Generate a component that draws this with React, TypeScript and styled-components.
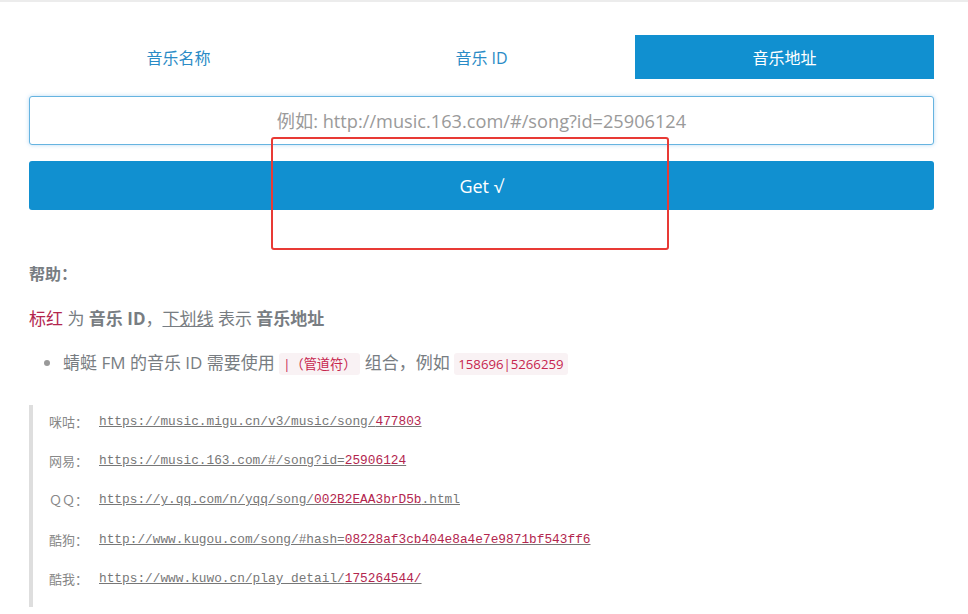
import React from "react";
import styled, { createGlobalStyle } from "styled-components";

const Global = createGlobalStyle`
  html, body { margin: 0; padding: 0; background: #fff; overflow: hidden; }
  body { font-family: "Open Sans", "Noto Sans CJK SC", sans-serif; }
`;

const Page = styled.div`
  position: relative;
  border-top: 2px solid #ececec;
  padding: 33px 34px 0 29px;
  width: 905px;
  height: 579px;
  box-sizing: content-box;
  overflow: hidden;
`;

const Tabs = styled.div`
  display: grid;
  grid-template-columns: repeat(3, 1fr);
  column-gap: 4px;
  height: 44px;
`;

const Tab = styled.div<{ $active?: boolean }>`
  display: flex;
  align-items: center;
  justify-content: center;
  font-size: 16px;
  font-family: "Open Sans", "Noto Sans CJK SC", sans-serif;
  color: ${(p) => (p.$active ? "#fff" : "#2a8bc6")};
  background: ${(p) => (p.$active ? "#1190d0" : "transparent")};
`;

const Input = styled.input`
  display: block;
  margin-top: 17px;
  width: 100%;
  height: 49px;
  box-sizing: border-box;
  border: 1px solid #66b4e0;
  border-radius: 3px;
  box-shadow: 0 0 4px rgba(102, 175, 233, 0.45);
  text-align: center;
  font-size: 18.2px;
  font-family: "Open Sans", "Noto Sans CJK SC", sans-serif;
  color: #555;
  outline: none;
  &::placeholder { color: #9a9a9a; }
`;

const Button = styled.button`
  display: block;
  margin-top: 16px;
  width: 100%;
  height: 49px;
  border: none;
  border-radius: 3px;
  background: #1190d0;
  color: #fff;
  font-size: 18px;
  font-family: "Open Sans", "Noto Sans CJK SC", sans-serif;
`;

const Help = styled.div`
  margin-top: 53px;
  color: #787d82;
  font-family: "Open Sans", "Noto Sans CJK SC", sans-serif;
`;

const HelpTitle = styled.div`
  font-size: 16px;
  font-weight: 700;
  line-height: 22px;
`;

const Legend = styled.p`
  margin: 23px 0 0;
  font-size: 17px;
  line-height: 22px;
`;

const Red = styled.span`
  color: #b3264e;
`;

const Under = styled.span`
  text-decoration: underline;
`;

const List = styled.ul`
  margin: 22px 0 0;
  padding-left: 34px;
  font-size: 17px;
  line-height: 22px;
  li::marker { color: #999; }
`;

const Code = styled.code`
  font-family: "Open Sans", "Noto Sans CJK SC", sans-serif;
  font-size: 13.2px;
  color: #c7254e;
  background: #f9f2f4;
  padding: 2px 4px;
  border-radius: 3px;
`;

const Quote = styled.div`
  margin-top: 30px;
  border-left: 4px solid #dedede;
  padding: 6px 0 18px 16px;
  display: flex;
  flex-direction: column;
  gap: 19.4px;
`;

const Row = styled.div`
  display: flex;
  align-items: center;
  height: 20px;
  font-size: 13px;
  color: #888;
`;

const Label = styled.span`
  width: 50px;
  font-family: "Noto Sans CJK SC", sans-serif;
`;

const Url = styled.span`
  font-family: "Liberation Mono", monospace;
  font-size: 12.8px;
  color: #777;
  text-decoration: underline;
`;

const UrlRed = styled.span`
  color: #b3264e;
`;

const Annotation = styled.div`
  position: absolute;
  left: 271px;
  top: 135px;
  width: 398px;
  height: 113px;
  box-sizing: border-box;
  border: 2px solid #e83a35;
  border-radius: 3px;
  pointer-events: none;
`;

const rows: { label: string; base: string; red: string; tail?: string }[] = [
  { label: "咪咕：", base: "https://music.migu.cn/v3/music/song/", red: "477803" },
  { label: "网易：", base: "https://music.163.com/#/song?id=", red: "25906124" },
  { label: "ＱＱ：", base: "https://y.qq.com/n/yqq/song/", red: "002B2EAA3brD5b", tail: ".html" },
  { label: "酷狗：", base: "http://www.kugou.com/song/#hash=", red: "08228af3cb404e8a4e7e9871bf543ff6" },
  { label: "酷我：", base: "https://www.kuwo.cn/play_detail/", red: "175264544/" },
];

export default function App() {
  return (
    <>
      <Global />
      <Page>
        <Tabs>
          <Tab>音乐名称</Tab>
          <Tab>音乐 ID</Tab>
          <Tab $active>音乐地址</Tab>
        </Tabs>
        <Input placeholder="例如: http://music.163.com/#/song?id=25906124" />
        <Button>Get √</Button>
        <Help>
          <HelpTitle>帮助：</HelpTitle>
          <Legend>
            <Red>标红</Red> 为 <b>音乐 ID</b>，<Under>下划线</Under> 表示 <b>音乐地址</b>
          </Legend>
          <List>
            <li>
              蜻蜓 FM 的音乐 ID 需要使用 <Code>|（管道符）</Code> 组合，例如 <Code>158696|5266259</Code>
            </li>
          </List>
          <Quote>
            {rows.map((r) => (
              <Row key={r.label}>
                <Label>{r.label}</Label>
                <Url>
                  {r.base}
                  <UrlRed>{r.red}</UrlRed>
                  {r.tail}
                </Url>
              </Row>
            ))}
          </Quote>
        </Help>
        <Annotation />
      </Page>
    </>
  );
}
